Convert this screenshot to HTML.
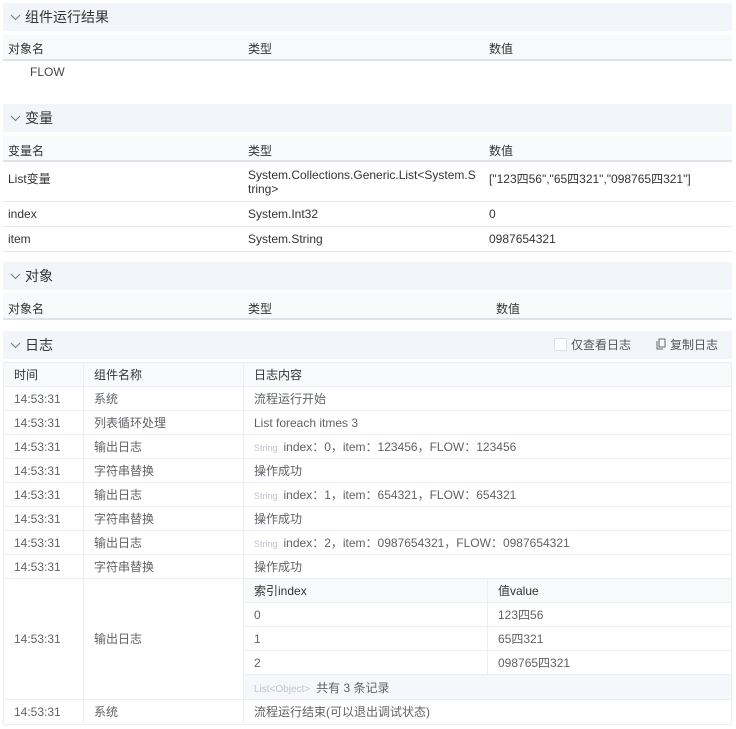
<!DOCTYPE html>
<html><head><meta charset="utf-8"><style>
*{margin:0;padding:0;box-sizing:border-box}
body{width:736px;height:729px;background:#fff;font-family:"Liberation Sans","Noto Sans CJK SC",sans-serif;font-size:12px;color:#333;position:relative;overflow:hidden}
.a{position:absolute;white-space:nowrap}
.sec{position:absolute;left:3px;width:729px;height:28px;background:#f2f5fa;font-size:14px;color:#333;line-height:28px;padding-left:22px}
.sec svg{position:absolute;left:7px;top:11px}
.th{position:absolute;left:3px;width:729px;height:26px;background:#f8f9fa;border-bottom:2px solid #dfe2e8}
.line{position:absolute;left:3px;width:729px;height:1px;background:#e4e7ed}
.g{color:#606266}
.lc{position:absolute;border-right:1px solid #ebeef5;border-bottom:1px solid #ebeef5;line-height:25px;padding-left:10px;color:#606266;white-space:nowrap;overflow:hidden}
.small{font-size:9px;color:#c0c4cc;margin-right:6px}
</style></head><body>
<div class="sec" style="top:3px"><svg width="11" height="7"><path d="M1 1l4.5 4.5L10 1" stroke="#777" fill="none"/></svg>组件运行结果</div>
<div class="th" style="top:35px"></div>
<div class="a" style="left:8px;top:40px">对象名</div><div class="a" style="left:248px;top:40px">类型</div><div class="a" style="left:489px;top:40px">数值</div>
<div class="a g" style="left:30px;top:65px;font-size:12px;color:#444">FLOW</div>

<div class="sec" style="top:104px"><svg width="11" height="7"><path d="M1 1l4.5 4.5L10 1" stroke="#777" fill="none"/></svg>变量</div>
<div class="th" style="top:136px"></div>
<div class="a" style="left:8px;top:142px">变量名</div><div class="a" style="left:248px;top:142px">类型</div><div class="a" style="left:489px;top:142px">数值</div>
<div class="a" style="left:8px;top:170px">List变量</div>
<div class="a" style="left:248px;top:168px;line-height:14px">System.Collections.Generic.List&lt;System.S<br>tring&gt;</div>
<div class="a" style="left:489px;top:170px">["123四56","65四321","098765四321"]</div>
<div class="line" style="top:201px"></div>
<div class="a" style="left:8px;top:207px">index</div><div class="a" style="left:248px;top:207px">System.Int32</div><div class="a" style="left:489px;top:207px">0</div>
<div class="line" style="top:226px"></div>
<div class="a" style="left:8px;top:232px">item</div><div class="a" style="left:248px;top:232px">System.String</div><div class="a" style="left:489px;top:232px">0987654321</div>
<div class="line" style="top:251px"></div>

<div class="sec" style="top:262px"><svg width="11" height="7"><path d="M1 1l4.5 4.5L10 1" stroke="#777" fill="none"/></svg>对象</div>
<div class="th" style="top:293px;height:27px"></div>
<div class="a" style="left:8px;top:300px">对象名</div><div class="a" style="left:248px;top:300px">类型</div><div class="a" style="left:496px;top:300px">数值</div>

<div class="sec" style="top:331px"><svg width="11" height="7"><path d="M1 1l4.5 4.5L10 1" stroke="#777" fill="none"/></svg>日志
<span class="a" style="left:551px;top:7px;width:13px;height:13px;border:1px solid #dcdfe6;border-radius:2px;background:#fff"></span>
<span class="a" style="left:568px;top:0;font-size:12px;color:#555">仅查看日志</span>
<svg class="a" style="left:653px;top:7px" width="10" height="12"><path d="M3 1h6v8h-6z M1 3v8h6" stroke="#666" fill="none"/></svg>
<span class="a" style="left:667px;top:0;font-size:12px;color:#555">复制日志</span></div>

<div style="position:absolute;left:3px;top:362px;width:729px;height:363px;border-left:1px solid #ebeef5;border-top:1px solid #ebeef5"></div>
<div style="position:absolute;left:4px;top:363px;width:727px;height:24px;background:#f8f9fa"></div>
<div id="log"></div>
<script>
var rows=[["时间","组件名称","日志内容",1],["14:53:31","系统","流程运行开始"],["14:53:31","列表循环处理","List foreach itmes 3"],["14:53:31","输出日志","<span class='small'>String</span>index：0，item：123456，FLOW：123456"],["14:53:31","字符串替换","操作成功"],["14:53:31","输出日志","<span class='small'>String</span>index：1，item：654321，FLOW：654321"],["14:53:31","字符串替换","操作成功"],["14:53:31","输出日志","<span class='small'>String</span>index：2，item：0987654321，FLOW：0987654321"],["14:53:31","字符串替换","操作成功"]];
var h="",y=363;
rows.forEach(function(r){var c=r[3]?"color:#333;":"";
h+="<div class='lc' style='"+c+"left:4px;top:"+y+"px;width:80px;height:24px'>"+r[0]+"</div>";
h+="<div class='lc' style='"+c+"left:84px;top:"+y+"px;width:160px;height:24px'>"+r[1]+"</div>";
h+="<div class='lc' style='"+c+"left:244px;top:"+y+"px;width:488px;height:24px'>"+r[2]+"</div>";y+=24;});
h+="<div class='lc' style='left:4px;top:579px;width:80px;height:121px;line-height:121px'>14:53:31</div>";
h+="<div class='lc' style='left:84px;top:579px;width:160px;height:121px;line-height:121px'>输出日志</div>";
h+="<div class='lc' style='left:244px;top:579px;width:244px;height:24px;background:#f8f9fa;color:#333'>索引index</div>";
h+="<div class='lc' style='left:488px;top:579px;width:244px;height:24px;background:#f8f9fa;color:#333'>值value</div>";
var v=[["0","123四56"],["1","65四321"],["2","098765四321"]];y=603;
v.forEach(function(r){h+="<div class='lc' style='left:244px;top:"+y+"px;width:244px;height:24px'>"+r[0]+"</div><div class='lc' style='left:488px;top:"+y+"px;width:244px;height:24px'>"+r[1]+"</div>";y+=24;});
h+="<div class='lc' style='left:244px;top:675px;width:488px;height:25px;background:#f5f7fa;line-height:26px'><span class='small' style='font-size:10px'>List&lt;Object&gt;</span>共有 3 条记录</div>";
h+="<div class='lc' style='left:4px;top:700px;width:80px;height:25px'>14:53:31</div><div class='lc' style='left:84px;top:700px;width:160px;height:25px'>系统</div><div class='lc' style='left:244px;top:700px;width:488px;height:25px'>流程运行结束(可以退出调试状态)</div>";
document.getElementById("log").innerHTML=h;
</script>
</body></html>
